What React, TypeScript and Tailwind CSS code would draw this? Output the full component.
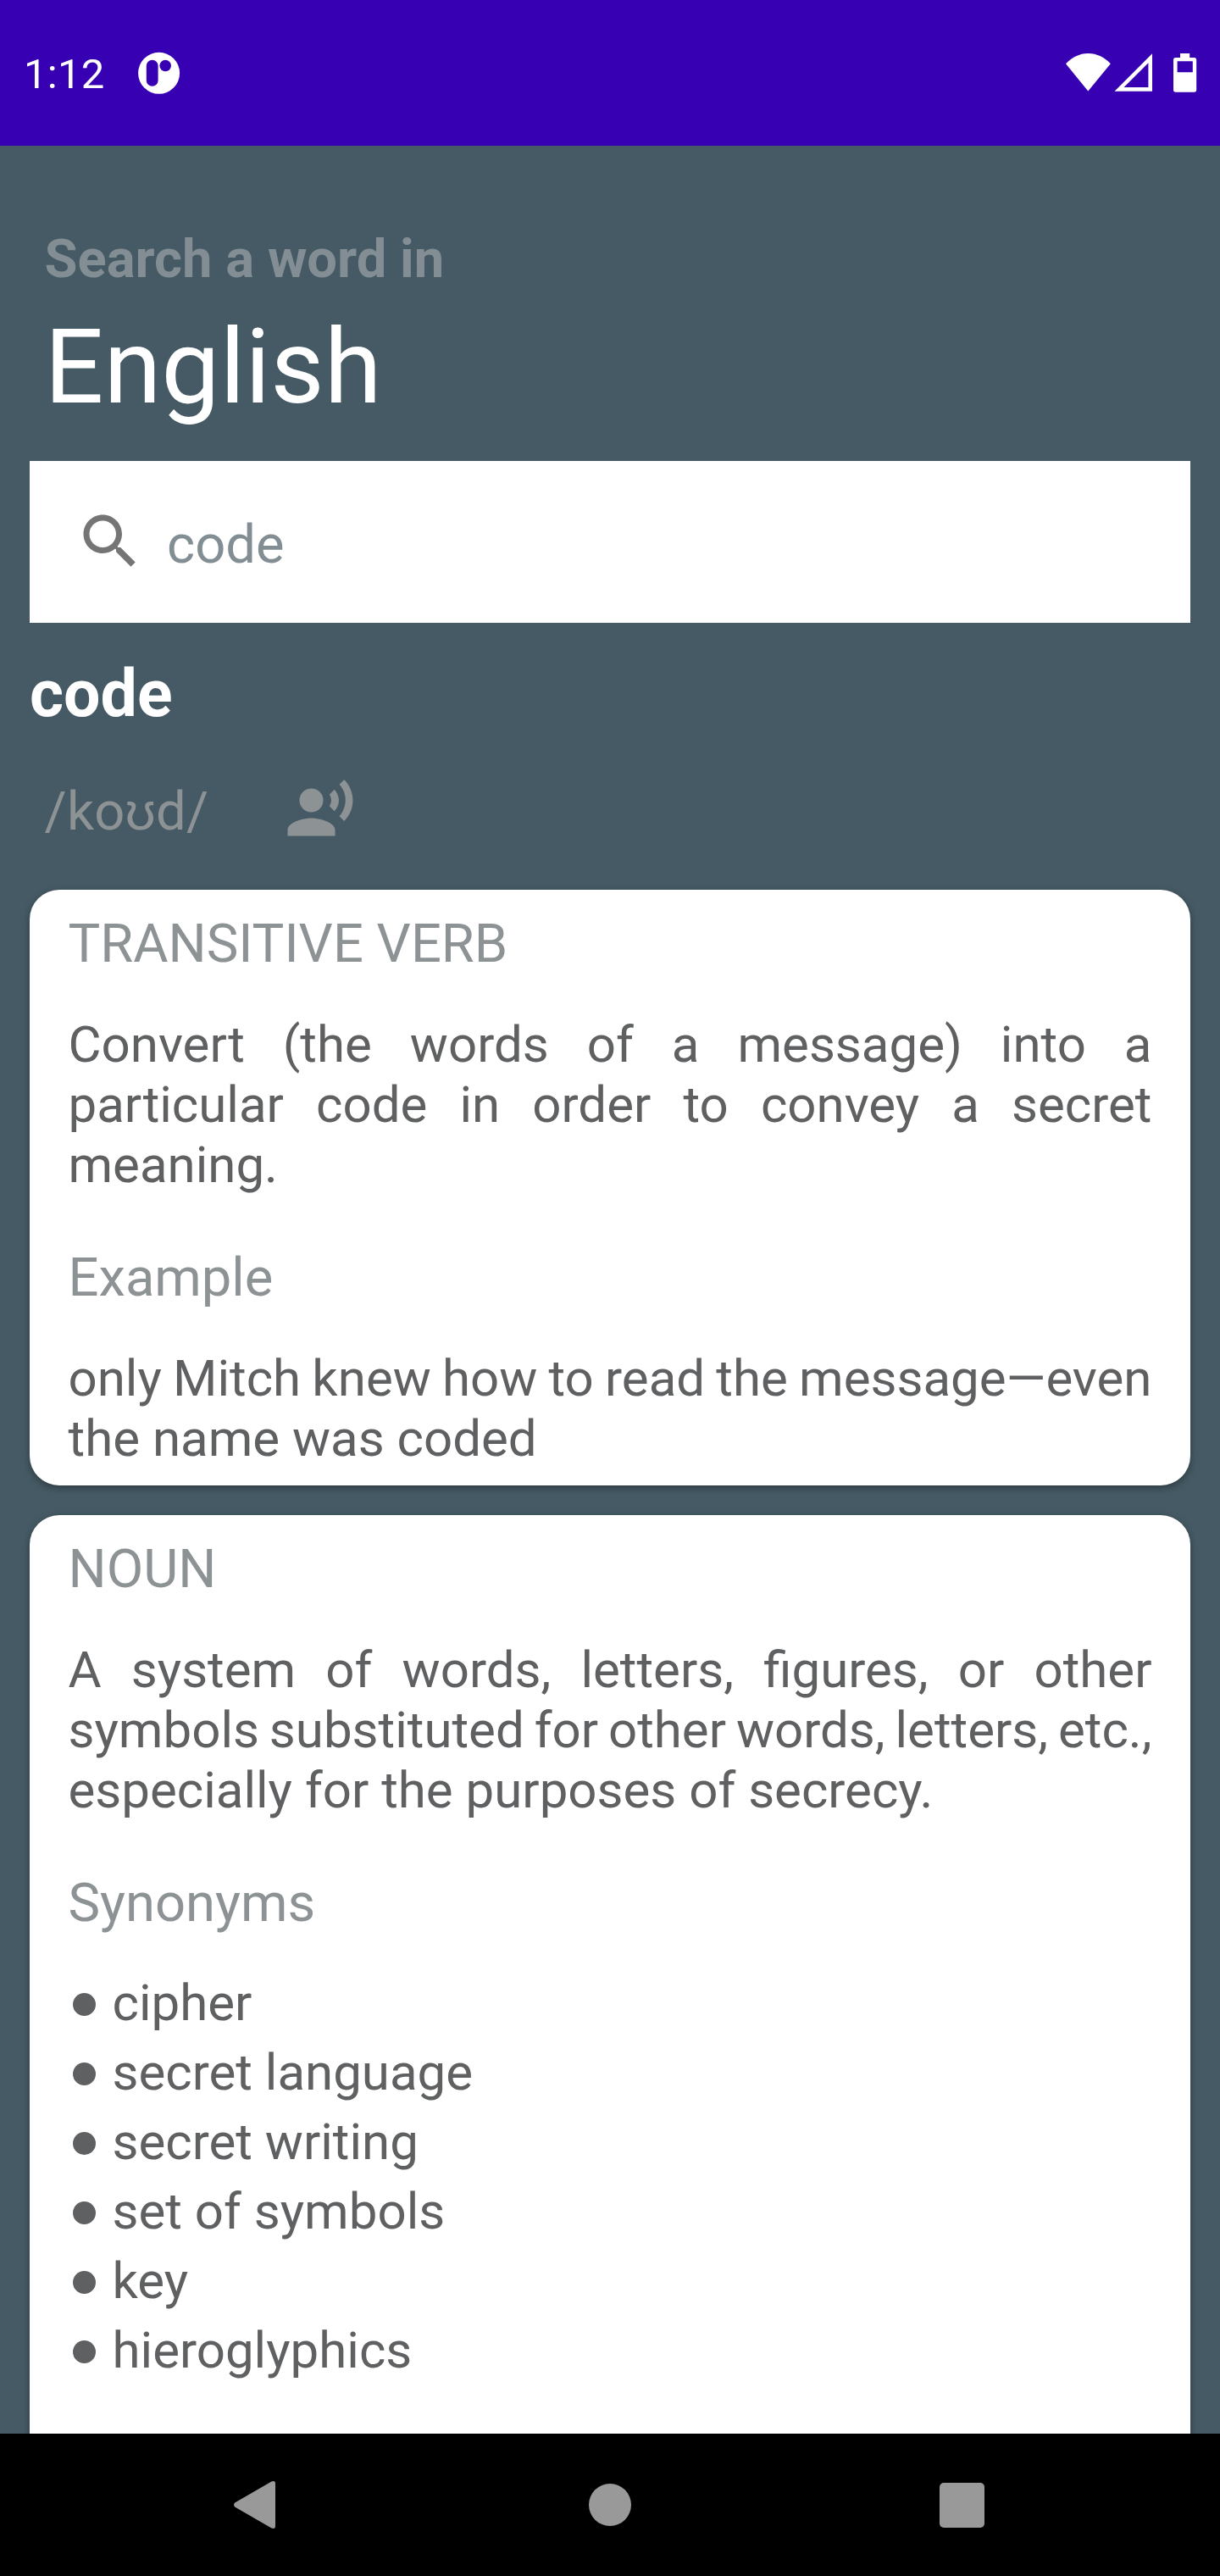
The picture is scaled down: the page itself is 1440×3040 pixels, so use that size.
import React from "react";

function AppBadge() {
  return (
    <svg width="50" height="50" viewBox="0 0 50 50" className="ml-[39px] mt-[61px]">
      <circle cx="24.6" cy="25.3" r="24.5" fill="#fff" />
      <rect x="9.8" y="9.8" width="13.8" height="31" rx="6.9" fill="#3700b3" />
      <circle cx="32.2" cy="16.5" r="6.8" fill="#3700b3" />
    </svg>
  );
}

function StatusIcons() {
  return (
    <svg width="160" height="50" viewBox="0 0 160 50" fill="#fff" className="ml-auto mr-[25px] mt-[61px]">
      <path d="M3 14.3C10 6.8 19 2 29.3 2S49 6.8 55.8 14.3L29.3 46.6Z" />
      <path fillRule="evenodd" d="M60.5 46.8 105 2.3V46.8ZM71.6 42H100.4V13.2Z" />
      <path
        fillRule="evenodd"
        d="M138 2h11.2v5H154.5a2.7 2.7 0 0 1 2.7 2.7V45a2.7 2.7 0 0 1-2.7 2.7H132.7A2.7 2.7 0 0 1 130 45V9.7A2.7 2.7 0 0 1 132.7 7H138ZM134.6 11.3V24.3H152.8V11.3Z"
      />
    </svg>
  );
}

function SearchIcon() {
  return (
    <svg width="84" height="84" viewBox="0 0 24 24" fill="#757575" className="mb-[2px] ml-[52.5px] shrink-0">
      <path d="M15.5 14h-.79l-.28-.27C15.41 12.59 16 11.11 16 9.5 16 5.91 13.09 3 9.5 3S3 5.91 3 9.5 5.91 16 9.5 16c1.61 0 3.09-.59 4.23-1.57l.27.28v.79l5 4.99L20.49 19l-4.99-5zm-6 0C7.01 14 5 11.99 5 9.5S7.01 5 9.5 5 14 7.01 14 9.5 11.99 14 9.5 14z" />
    </svg>
  );
}

function VoiceIcon() {
  return (
    <svg width="84" height="84" viewBox="0 0 24 24" fill="#8d9294" className="shrink-0">
      <circle cx="9" cy="9" r="4" />
      <path d="M9 15c-2.67 0-8 1.34-8 4v2h16v-2c0-2.66-5.33-4-8-4zm7.76-9.64l-1.68 1.69c.84 1.18.84 2.71 0 3.89l1.68 1.69c2.02-2.02 2.02-5.07 0-7.27zM20.07 2l-1.63 1.63c2.77 3.02 2.77 7.56 0 10.74L20.07 16c3.9-3.89 3.91-9.95 0-14z" />
    </svg>
  );
}

function Label({ children }: { children: string }) {
  return <h2 className="text-[63.3px] leading-[73px] text-[#8d9294]">{children}</h2>;
}

/* Paragraph with fully justified lines; the closing line keeps its natural width. */
function Justified({ lines }: { lines: string[] }) {
  return (
    <p className="mt-[47px] text-[60px] leading-[71px] text-[#5f6062]">
      {lines.map((line, i) =>
        i < lines.length - 1 ? (
          <span key={line} className="block whitespace-nowrap [text-align-last:justify] [word-spacing:-8px]">
            {line}
          </span>
        ) : (
          <span key={line} className="block whitespace-nowrap">
            {line}
          </span>
        ),
      )}
    </p>
  );
}

const CARD = "rounded-[35px] bg-white px-[45.5px] pt-[27px] shadow-[0_3px_9px_rgba(0,0,0,0.36)]";

const synonyms = ["cipher", "secret language", "secret writing", "set of symbols", "key", "hieroglyphics"];

export default function App() {
  return (
    <div className="flex h-[3040px] w-[1440px] flex-col overflow-hidden bg-[#455a64] font-[Roboto,sans-serif]">
      <header className="flex h-[172px] shrink-0 items-start bg-[#3700b3]">
        <span className="ml-[28px] mt-[59px] w-[96px] whitespace-nowrap text-[49px] leading-[57px] tracking-[0.3px] text-white">
          1:12
        </span>
        <AppBadge />
        <StatusIcons />
      </header>

      <main className="flex min-h-0 flex-1 flex-col overflow-hidden px-[35px]">
        <p className="ml-[17.5px] mt-[97px] text-[63.3px] font-bold leading-[73px] text-[#828e94]">
          Search a word in
        </p>
        <h1 className="ml-[17.5px] mt-[19px] text-[123px] leading-[144px] text-white">English</h1>

        <div className="mt-[39px] flex h-[191px] shrink-0 items-center bg-white">
          <SearchIcon />
          <span className="ml-[25.5px] mt-[5px] text-[63.3px] leading-[73px] text-[#828e94]">code</span>
        </div>

        <h2 className="mt-[39px] text-[77px] font-bold leading-[90px] text-white">code</h2>

        <div className="ml-[17.5px] mt-[49px] flex h-[84px] shrink-0 items-start">
          <span className="mt-[8px] w-[283.5px] text-[63.3px] leading-[73px] tracking-[0.3px] text-[#8d9294]">/koʊd/</span>
          <VoiceIcon />
        </div>

        <section className={`${CARD} mt-[53px] h-[703px] shrink-0`}>
          <Label>TRANSITIVE VERB</Label>
          <Justified
            lines={[
              "Convert (the words of a message) into a",
              "particular code in order to convey a secret",
              "meaning.",
            ]}
          />
          <div className="mt-[61px]">
            <Label>Example</Label>
          </div>
          <Justified lines={["only Mitch knew how to read the message—even", "the name was coded"]} />
        </section>

        <section className={`${CARD} mt-[35px] h-[1200px] shrink-0`}>
          <Label>NOUN</Label>
          <Justified
            lines={[
              "A system of words, letters, figures, or other",
              "symbols substituted for other words, letters, etc.,",
              "especially for the purposes of secrecy.",
            ]}
          />
          <div className="mt-[61px]">
            <Label>Synonyms</Label>
          </div>
          <ul className="mt-[41px] text-[60px] leading-[82px] text-[#5f6062]">
            {synonyms.map((word) => (
              <li key={word} className="flex h-[82px] items-center">
                <span className="mr-[20px] ml-[5px] mt-[3px] size-[27px] rounded-full bg-[#5f6062]" />
                <span>{word}</span>
              </li>
            ))}
          </ul>
        </section>
      </main>

      <nav className="flex h-[168px] shrink-0 items-center justify-between bg-black pl-[276px] pr-[278.5px]">
        <svg width="50" height="58" viewBox="0 0 50 58" fill="#999">
          <path d="M1.2 26.5 44.5 1.5Q49-.2 49 4V54Q49 58.2 44.5 56.5L1.2 31.5Q-1.2 29 1.2 26.5Z" />
        </svg>
        <span className="ml-[5px] size-[50px] rounded-full bg-[#999]" />
        <span className="size-[53px] rounded-[5px] bg-[#999]" />
      </nav>
    </div>
  );
}
